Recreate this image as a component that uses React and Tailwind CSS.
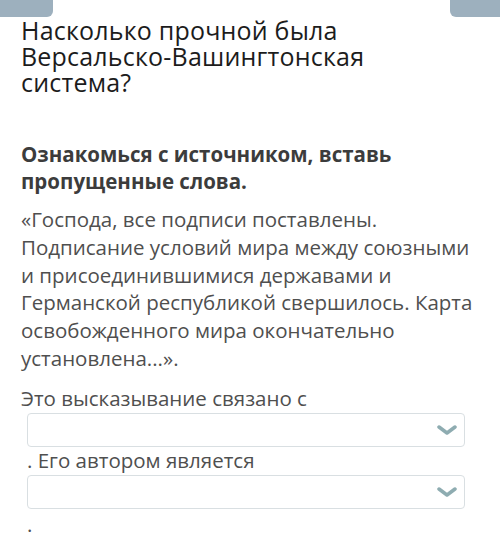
import React from 'react';

function Dropdown({ className = '' }) {
  return (
    <div className={`ml-[6px] mr-[10px] h-[34px] rounded-[4px] border border-[#d9dfe2] bg-white flex items-center justify-end pr-[7px] ${className}`}>
      <svg width="20" height="10" viewBox="0 0 20 10" fill="none">
        <path d="M2 2 L10 8 L18 2" stroke="#8eacb1" strokeWidth="3.5" strokeLinecap="round" strokeLinejoin="round" />
      </svg>
    </div>
  );
}

export default function App() {
  return (
    <div className="w-[500px] h-[544px] bg-white overflow-hidden" style={{ fontFamily: '"Open Sans", "Noto Sans", sans-serif' }}>
      {/* tabs peeking from the top edge */}
      <div className="flex justify-between">
        <div className="w-[53px] h-[17px] bg-[#9db0be] rounded-br-[6px]" />
        <div className="w-[50px] h-[17px] bg-[#9db0be] rounded-bl-[6px]" />
      </div>

      <div className="pl-[21px] pr-[25px]">
        <h1 className="w-[400px] text-[25px] leading-[26px] tracking-[0.2px] text-[#1c1c1c] font-normal">
          Насколько прочной была Версальско-Вашингтонская система?
        </h1>

        <h2 className="mt-[46px] text-[20.5px] leading-[27px] font-bold text-[#3c3c3c]">
          Ознакомься с источником, вставь пропущенные слова.
        </h2>

        <p className="mt-[11px] text-[20.5px] leading-[27.8px] text-[#4f4f4f]">
          «Господа, все подписи поставлены. Подписание условий мира между союзными и присоединившимися державами и Германской республикой свершилось. Карта освобожденного мира окончательно установлена...».
        </p>

        <div className="mt-[12px] text-[20.5px] leading-[27.8px] text-[#4f4f4f]">
          <div>Это высказывание связано с</div>
          <Dropdown />
          <div className="pl-[6px]">. Его автором является</div>
          <Dropdown className="mt-[1px]" />
          <div className="pl-[6px] leading-[30px]">.</div>
        </div>
      </div>
    </div>
  );
}
